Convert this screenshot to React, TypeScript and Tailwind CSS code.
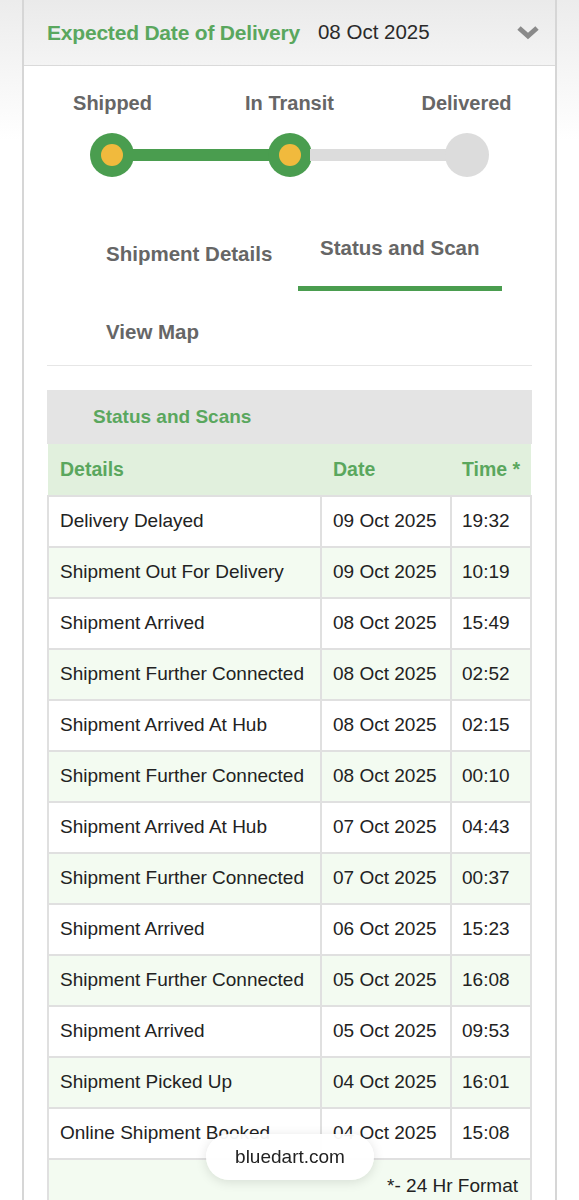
import React from "react"

const rows = [
  { d: "Delivery Delayed", date: "09 Oct 2025", t: "19:32" },
  { d: "Shipment Out For Delivery", date: "09 Oct 2025", t: "10:19" },
  { d: "Shipment Arrived", date: "08 Oct 2025", t: "15:49" },
  { d: "Shipment Further Connected", date: "08 Oct 2025", t: "02:52" },
  { d: "Shipment Arrived At Hub", date: "08 Oct 2025", t: "02:15" },
  { d: "Shipment Further Connected", date: "08 Oct 2025", t: "00:10" },
  { d: "Shipment Arrived At Hub", date: "07 Oct 2025", t: "04:43" },
  { d: "Shipment Further Connected", date: "07 Oct 2025", t: "00:37" },
  { d: "Shipment Arrived", date: "06 Oct 2025", t: "15:23" },
  { d: "Shipment Further Connected", date: "05 Oct 2025", t: "16:08" },
  { d: "Shipment Arrived", date: "05 Oct 2025", t: "09:53" },
  { d: "Shipment Picked Up", date: "04 Oct 2025", t: "16:01" },
  { d: "Online Shipment Booked", date: "04 Oct 2025", t: "15:08" },
]

function Dot({ done }: { done: boolean }) {
  if (!done) return <div className="w-[44px] h-[44px] rounded-full bg-[#dcdcdc] flex-shrink-0" />
  return (
    <div className="w-[44px] h-[44px] rounded-full bg-[#4a9d4f] flex items-center justify-center flex-shrink-0">
      <div className="w-[22px] h-[22px] rounded-full bg-[#f1ba3d]" />
    </div>
  )
}

export default function App() {
  return (
    <div
      className="min-h-screen bg-linear-to-b from-[#ececec] to-white to-[140px] px-[22px] text-[#222]"
      style={{ fontFamily: '"Liberation Sans", Arial, sans-serif' }}
    >
      <div className="bg-white border-x-2 border-[#d6d6d6] min-h-[1200px]">
        {/* Header */}
        <div className="h-[66px] bg-linear-to-b from-[#eaeaea] to-[#f4f4f4] border-b border-[#dadada] flex items-center pl-[23px] pr-[16px]">
          <span className="text-[21px] font-bold text-[#5aa75e] tracking-[-0.2px]">Expected Date of Delivery</span>
          <span className="text-[20.5px] ml-[18px] text-[#2a2a2a]">08 Oct 2025</span>
          <svg className="ml-auto w-[22px] h-[14px]" viewBox="0 0 22 14">
            <path d="M2 2 L11 10 L20 2" fill="none" stroke="#8a8a8a" strokeWidth="5" strokeLinejoin="miter" />
          </svg>
        </div>

        {/* Stepper */}
        <div className="grid grid-cols-3 mt-[25px] text-[20px] font-bold text-[#666] leading-[24px]">
          <div className="text-center">Shipped</div>
          <div className="text-center">In Transit</div>
          <div className="text-center">Delivered</div>
        </div>
        <div className="flex items-center px-[66px] mt-[18px]">
          <Dot done />
          <div className="flex-1 h-[12px] bg-[#4a9d4f] -mx-[2px]" />
          <Dot done />
          <div className="flex-1 h-[12px] bg-[#dcdcdc] -mx-[2px]" />
          <Dot done={false} />
        </div>

        {/* Tabs */}
        <div className="flex items-start pl-[60px] mt-[60px] text-[20.5px] font-bold text-[#666]">
          <div className="w-[214px] pl-[22px] pt-[6px] leading-[22px]">Shipment Details</div>
          <div className="w-[204px] pl-[22px] leading-[22px] pb-[27px] border-b-[5px] border-[#4a9d4f]">Status and Scan</div>
        </div>
        <div className="pl-[82px] mt-[30px] text-[20.5px] font-bold text-[#666] leading-[22px]">View Map</div>
        <div className="mx-[23px] mt-[22px] border-t border-[#e6e6e6]" />

        {/* Table */}
        <div className="mx-[23px] mt-[24px]">
          <div className="h-[54px] bg-[#e4e4e4] flex items-center pl-[46px] text-[19px] font-bold text-[#5aa75e]">
            Status and Scans
          </div>
          <table className="w-full border-collapse text-[19px]">
            <thead>
              <tr className="h-[52px] bg-[#e1f0dd] text-[#5aa75e] text-left text-[19.5px]">
                <th className="w-[273px] pl-[12px] font-bold">Details</th>
                <th className="w-[130px] pl-[12px] font-bold">Date</th>
                <th className="pl-[11px] font-bold">Time *</th>
              </tr>
            </thead>
            <tbody>
              {rows.map((r, i) => (
                <tr key={i} className={i % 2 === 0 ? "h-[51px] bg-white" : "h-[51px] bg-[#f3fbf1]"}>
                  <td className="border-2 border-[#e0e0e0] pl-[11px] whitespace-nowrap">{r.d}</td>
                  <td className="border-2 border-[#e0e0e0] pl-[11px] whitespace-nowrap">{r.date}</td>
                  <td className="border-2 border-[#e0e0e0] pl-[10px] whitespace-nowrap">{r.t}</td>
                </tr>
              ))}
              <tr className="bg-[#f3fbf1]">
                <td colSpan={3} className="h-[60px] align-top text-right pr-[12px] pt-[15px] leading-[22px] border-x-2 border-t-2 border-[#e0e0e0]">*- 24 Hr Format</td>
              </tr>
            </tbody>
          </table>
        </div>
      </div>

      {/* browser url pill */}
      <div className="fixed bottom-[20px] left-[206px] w-[168px] h-[46px] rounded-full bg-white/95 shadow-[0_2px_12px_rgba(0,0,0,0.12)] flex items-center justify-center text-[19px] text-[#222]">
        bluedart.com
      </div>
    </div>
  )
}
